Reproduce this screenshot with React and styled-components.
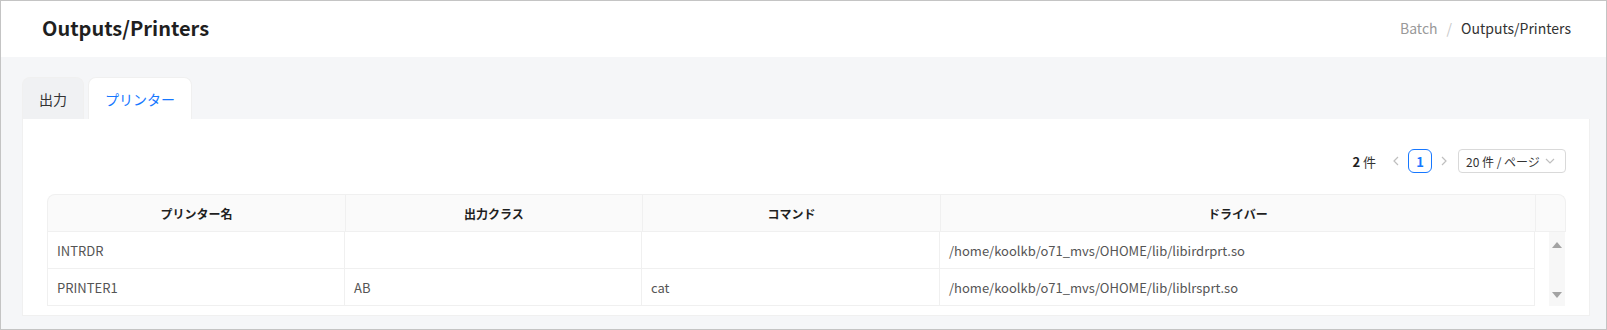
import React from "react";
import styled, { createGlobalStyle } from "styled-components";

const font = `"Noto Sans CJK JP", "Noto Sans", sans-serif`;
const line = "#f0f0f0";

const Global = createGlobalStyle`
  html, body {
    margin: 0;
    padding: 0;
    background: #ffffff;
  }
  * {
    box-sizing: border-box;
  }
`;

const Frame = styled.div`
  width: 1607px;
  height: 330px;
  border: 1px solid #c4c4c4;
  background: #f5f6f8;
  display: flex;
  flex-direction: column;
  font-family: ${font};
  overflow: hidden;
`;

const Header = styled.div`
  height: 56px;
  flex: none;
  background: #ffffff;
  display: flex;
  align-items: center;
  justify-content: space-between;
  padding: 0 35px 3px 41px;
`;

const Title = styled.h1`
  margin: 0;
  font-size: 20px;
  font-weight: 700;
  color: #1f1f1f;
`;

const Crumbs = styled.div`
  display: flex;
  align-items: center;
  gap: 9px;
  font-size: 14px;
  color: #999999;
`;

const Sep = styled.span`
  color: #c8c8c8;
`;

const Current = styled.span`
  color: #333333;
`;

const Content = styled.div`
  flex: 1;
  display: flex;
  flex-direction: column;
  padding: 20px 16px 13px 21px;
`;

const Tabs = styled.div`
  display: flex;
  gap: 4px;
  align-items: flex-end;
`;

const Tab = styled.div`
  height: 42px;
  padding: 0 16px;
  display: flex;
  align-items: center;
  font-size: 14px;
  border: 1px solid ${line};
  border-bottom: none;
  border-radius: 8px 8px 0 0;
  background: ${p => (p.active ? "#ffffff" : "#f0f1f3")};
  color: ${p => (p.active ? "#1677ff" : "#333333")};
`;

const Card = styled.div`
  flex: 1;
  background: #ffffff;
  border: 1px solid ${line};
  border-top: none;
  padding: 30px 23px 9px 24px;
  display: flex;
  flex-direction: column;
  gap: 21px;
`;

const Pager = styled.div`
  display: flex;
  justify-content: flex-end;
  align-items: center;
  height: 24px;
  font-size: 13px;
  color: #333333;
`;

const Total = styled.span`
  margin-right: 8px;
  b {
    font-weight: 700;
    color: #1f1f1f;
  }
`;

const Arrow = styled.span`
  width: 24px;
  height: 24px;
  display: flex;
  align-items: center;
  justify-content: center;
  color: #bfbfbf;
`;

const PageItem = styled.span`
  width: 24px;
  height: 24px;
  border: 1px solid #1677ff;
  border-radius: 6px;
  display: flex;
  align-items: center;
  justify-content: center;
  color: #1677ff;
  font-weight: 600;
  font-size: 13px;
`;

const SizeSelect = styled.div`
  margin-left: 2px;
  width: 108px;
  height: 24px;
  border: 1px solid #d9d9d9;
  border-radius: 4px;
  display: flex;
  align-items: center;
  justify-content: space-between;
  padding: 0 10px 0 7px;
  font-size: 12px;
  color: #333333;
`;

const Table = styled.div`
  display: flex;
  flex-direction: column;
`;

const cols = "298px 297px 298px 595px 30px";

const HeadRow = styled.div`
  display: grid;
  grid-template-columns: ${cols};
  background: #fafafa;
  border: 1px solid ${line};
  border-bottom: none;
  border-radius: 8px 8px 0 0;
  overflow: hidden;
`;

const HeadCell = styled.div`
  height: 37px;
  display: flex;
  align-items: center;
  justify-content: center;
  font-size: 12px;
  font-weight: 700;
  color: #1f1f1f;
  border-bottom: 1px solid ${line};
  border-right: ${p => (p.last ? "none" : `1px solid ${line}`)};
`;

const Body = styled.div`
  display: flex;
  align-items: stretch;
`;

const Rows = styled.div`
  width: 1488px;
  border-left: 1px solid ${line};
`;

const Row = styled.div`
  display: grid;
  grid-template-columns: 297px 297px 298px 595px;
`;

const Cell = styled.div`
  height: 37px;
  display: flex;
  align-items: center;
  padding: 0 9px;
  font-size: 13px;
  color: #555555;
  border-right: 1px solid ${line};
  border-bottom: 1px solid ${line};
`;

const Spacer = styled.div`
  width: 14px;
`;

const Scrollbar = styled.div`
  width: 16px;
  background: #f7f7f7;
  display: flex;
  flex-direction: column;
  justify-content: space-between;
  align-items: center;
  padding: 10px 0 8px;
`;

const Tri = ({ down }) => (
  <svg width="10" height="6" viewBox="0 0 10 6">
    <path d={down ? "M0 0H10L5 6Z" : "M0 6H10L5 0Z"} fill="#a3a3a3" />
  </svg>
);

const Chevron = ({ dir, color = "#bfbfbf" }) => {
  const d = {
    left: "M7 1L3 5L7 9",
    right: "M3 1L7 5L3 9",
    down: "M1 3L5 7L9 3",
  }[dir];
  return (
    <svg width="10" height="10" viewBox="0 0 10 10">
      <path d={d} fill="none" stroke={color} strokeWidth="1.2" />
    </svg>
  );
};

const headers = ["プリンター名", "出力クラス", "コマンド", "ドライバー"];

const rows = [
  ["INTRDR", "", "", "/home/koolkb/o71_mvs/OHOME/lib/libirdrprt.so"],
  ["PRINTER1", "AB", "cat", "/home/koolkb/o71_mvs/OHOME/lib/liblrsprt.so"],
];

export default function App() {
  return (
    <Frame>
      <Global />
      <Header>
        <Title>Outputs/Printers</Title>
        <Crumbs>
          <span>Batch</span>
          <Sep>/</Sep>
          <Current>Outputs/Printers</Current>
        </Crumbs>
      </Header>
      <Content>
        <Tabs>
          <Tab>出力</Tab>
          <Tab active>プリンター</Tab>
        </Tabs>
        <Card>
          <Pager>
            <Total>
              <b>2</b> 件
            </Total>
            <Arrow>
              <Chevron dir="left" />
            </Arrow>
            <PageItem>1</PageItem>
            <Arrow>
              <Chevron dir="right" />
            </Arrow>
            <SizeSelect>
              <span>20 件 / ページ</span>
              <Chevron dir="down" />
            </SizeSelect>
          </Pager>
          <Table>
            <HeadRow>
              {headers.map(h => (
                <HeadCell key={h}>{h}</HeadCell>
              ))}
              <HeadCell last />
            </HeadRow>
            <Body>
              <Rows>
                {rows.map(r => (
                  <Row key={r[0]}>
                    {r.map((c, i) => (
                      <Cell key={i}>{c}</Cell>
                    ))}
                  </Row>
                ))}
              </Rows>
              <Spacer />
              <Scrollbar>
                <Tri />
                <Tri down />
              </Scrollbar>
            </Body>
          </Table>
        </Card>
      </Content>
    </Frame>
  );
}
